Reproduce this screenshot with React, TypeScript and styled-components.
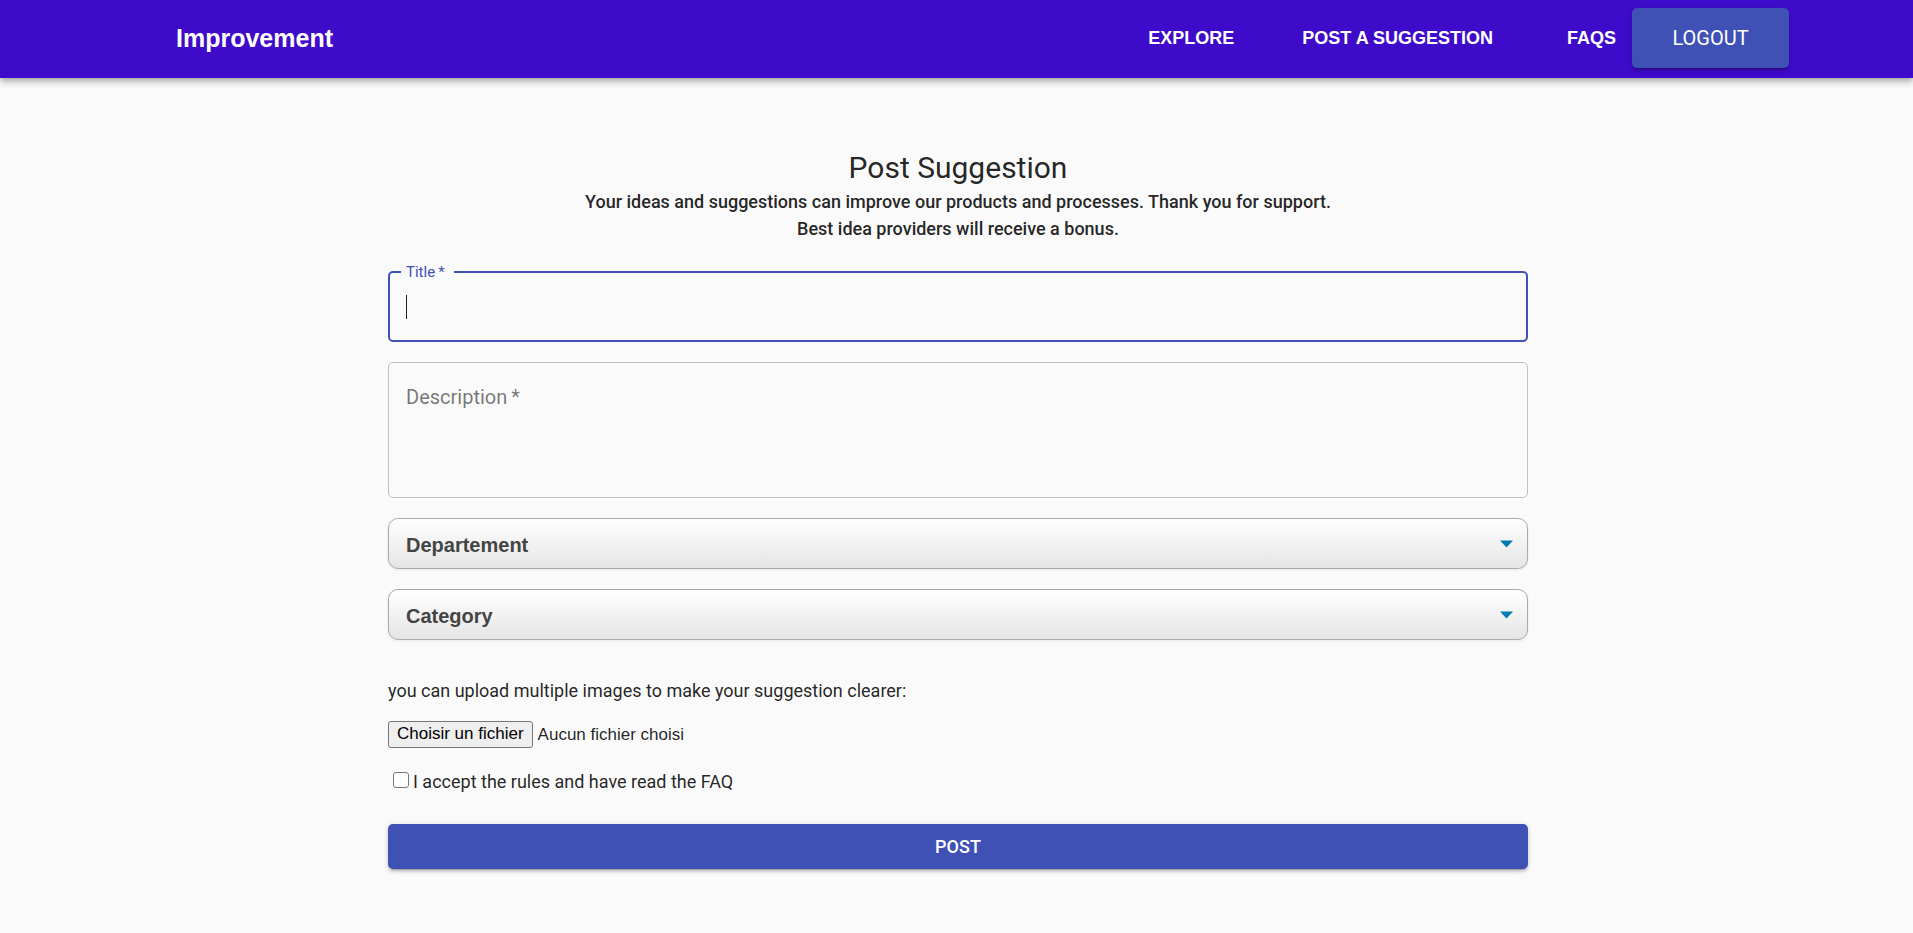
import React from "react";
import styled, { createGlobalStyle } from "styled-components";

const GlobalStyle = createGlobalStyle`
  *, *::before, *::after { box-sizing: border-box; }
  body {
    margin: 0;
    background: #fafafa;
    color: rgba(0, 0, 0, 0.87);
    font-family: Roboto, "Liberation Sans", sans-serif;
    font-size: 18px;
  }
`;

const Header = styled.header`
  display: flex;
  align-items: center;
  justify-content: space-between;
  height: 78px;
  padding: 0 124px 2px 176px;
  background: #3f0bca;
  box-shadow: 0 2px 5px -1px rgba(0, 0, 0, 0.2), 0 5px 6px rgba(0, 0, 0, 0.14),
    0 1px 12px rgba(0, 0, 0, 0.12);
`;

const Brand = styled.a`
  color: #fff;
  font: bold 25px/30px "Liberation Sans", Arial, sans-serif;
  text-decoration: none;
`;

const Nav = styled.nav`
  display: flex;
  align-items: center;
`;

const NavLink = styled.a<{ $gap: number }>`
  margin-right: ${(p) => p.$gap}px;
  color: #fff;
  font: bold 18px/24px "Liberation Sans", Arial, sans-serif;
  text-decoration: none;
  text-transform: uppercase;
`;

const raised = `
  border: 0;
  border-radius: 5px;
  background: #3f51b5;
  color: #fff;
  cursor: pointer;
  box-shadow: 0 4px 1px -3px rgba(0, 0, 0, 0.2), 0 3px 3px rgba(0, 0, 0, 0.14),
    0 1px 6px rgba(0, 0, 0, 0.12);
`;

const LogoutButton = styled.button`
  ${raised}
  width: 157px;
  height: 60px;
  font: 400 20px/24px Roboto, sans-serif;
`;

const Main = styled.main`
  padding: 70px 0 60px 3px;
`;

const Form = styled.form`
  display: flex;
  flex-direction: column;
  max-width: 1140px;
  margin: 0 auto;
`;

const Title = styled.h1`
  margin: 0;
  font-size: 30px;
  line-height: 40px;
  font-weight: 400;
  text-align: center;
`;

const Intro = styled.p`
  margin: 0 0 29px;
  font-size: 18px;
  line-height: 27px;
  font-weight: 500;
  text-align: center;
`;

const Field = styled.div`
  position: relative;
  display: flex;
  margin-bottom: 20px;
`;

const FloatingLabel = styled.label`
  position: absolute;
  top: -7px;
  left: 13px;
  padding: 0 9px 0 5px;
  background: #fafafa;
  color: #3f51b5;
  font-size: 15px;
  line-height: 16px;
`;

const InnerLabel = styled.label`
  position: absolute;
  top: 22px;
  left: 18px;
  color: rgba(0, 0, 0, 0.54);
  font-size: 20px;
  line-height: 26px;
  pointer-events: none;
`;

const TitleInput = styled.input`
  width: 100%;
  height: 71px;
  padding: 0 16px;
  border: 2px solid #3f51b5;
  border-radius: 5px;
  outline: 0;
  background: transparent;
  font: 400 20px/24px Roboto, sans-serif;

  &:placeholder-shown {
    caret-color: transparent;
    background: linear-gradient(#212121, #212121) 16px 22px / 1px 24px no-repeat;
  }
`;

const DescriptionInput = styled.textarea`
  width: 100%;
  height: 136px;
  padding: 22px 17px;
  border: 1px solid #c0c0c0;
  border-radius: 5px;
  outline: 0;
  resize: none;
  background: transparent;
  font: 400 20px/24px Roboto, sans-serif;
`;

const Select = styled.select`
  width: 100%;
  height: 51px;
  padding: 3px 40px 0 17px;
  border: 1px solid #aaa;
  border-radius: 10px;
  outline: 0;
  appearance: none;
  background: linear-gradient(#fff, #e5e5e5);
  box-shadow: 0 1px 1px 1px rgba(0, 0, 0, 0.04);
  color: #444;
  font: bold 20px/26px "Liberation Sans", Arial, sans-serif;
`;

const Arrow = styled.svg`
  position: absolute;
  top: 22px;
  right: 15px;
  width: 13px;
  height: 8px;
  pointer-events: none;
`;

const UploadNote = styled.p`
  margin: 19px 0 18px;
  line-height: 24px;
`;

const FileLabel = styled.label`
  position: relative;
  display: flex;
  align-items: center;
  align-self: flex-start;
  gap: 5px;
  height: 27px;
  font: 400 17px/20px "Liberation Sans", Arial, sans-serif;
`;

const FileInput = styled.input`
  position: absolute;
  inset: 0;
  width: 100%;
  opacity: 0;
`;

const FileButton = styled.span`
  height: 27px;
  padding: 2px 8px;
  border: 1px solid #767676;
  border-radius: 3px;
  background: #efefef;
  color: #000;
`;

const AcceptRow = styled.div`
  display: flex;
  align-items: center;
  margin: 22px 0 30px;
  padding-left: 5px;
  line-height: 24px;
`;

const Checkbox = styled.input`
  width: 16px;
  height: 16px;
  margin: 0 4px 4px 0;
  border: 1px solid #767676;
  border-radius: 3px;
  appearance: none;
  background: #fff;

  &:checked {
    background: #3f51b5;
  }
`;

const PostButton = styled.button`
  ${raised}
  height: 45px;
  font: 500 18px/24px Roboto, sans-serif;
`;

function Dropdown({ id, name }: { id: string; name: string }) {
  return (
    <Field>
      <Select id={id} aria-label={name} defaultValue="">
        <option value="">{name}</option>
      </Select>
      <Arrow viewBox="0 0 13 8" aria-hidden="true">
        <path d="M0 .5h13L6.500 7.500z" fill="#007cb2" />
      </Arrow>
    </Field>
  );
}

export default function App() {
  return (
    <>
      <GlobalStyle />
      <Header>
        <Brand href="#home">Improvement</Brand>
        <Nav>
          <NavLink href="#explore" $gap={68}>Explore</NavLink>
          <NavLink href="#post" $gap={74}>Post a suggestion</NavLink>
          <NavLink href="#faqs" $gap={16}>FAQs</NavLink>
          <LogoutButton type="button">LOGOUT</LogoutButton>
        </Nav>
      </Header>
      <Main>
        <Form onSubmit={(e) => e.preventDefault()}>
          <Title>Post Suggestion</Title>
          <Intro>
            Your ideas and suggestions can improve our products and processes. Thank you for support.
            <br />
            Best idea providers will receive a bonus.
          </Intro>
          <Field>
            <TitleInput id="title" type="text" placeholder=" " required />
            <FloatingLabel htmlFor="title">Title&thinsp;*</FloatingLabel>
          </Field>
          <Field>
            <DescriptionInput id="description" required />
            <InnerLabel htmlFor="description">Description&thinsp;*</InnerLabel>
          </Field>
          <Dropdown id="department" name="Departement" />
          <Dropdown id="category" name="Category" />
          <UploadNote>you can upload multiple images to make your suggestion clearer:</UploadNote>
          <FileLabel>
            <FileInput type="file" multiple />
            <FileButton>Choisir un fichier</FileButton>
            <span>Aucun fichier choisi</span>
          </FileLabel>
          <AcceptRow>
            <Checkbox id="accept" type="checkbox" />
            <label htmlFor="accept">I accept the rules and have read the FAQ</label>
          </AcceptRow>
          <PostButton type="submit">POST</PostButton>
        </Form>
      </Main>
    </>
  );
}
